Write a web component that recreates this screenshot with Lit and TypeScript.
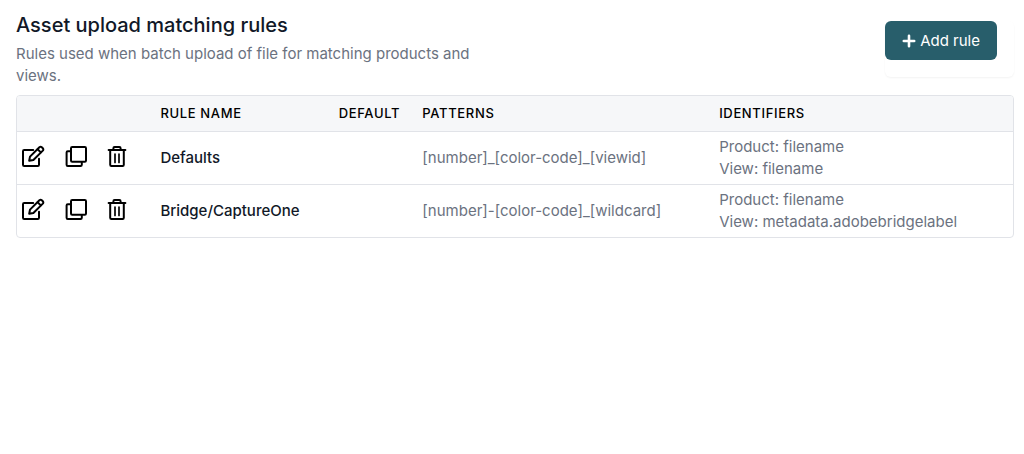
import { LitElement, html, css, svg } from "lit";
import { customElement } from "lit/decorators.js";

interface Rule {
  name: string;
  pattern: string;
  product: string;
  view: string;
}

const rules: Rule[] = [
  { name: "Defaults", pattern: "[number]_[color-code]_[viewid]", product: "filename", view: "filename" },
  { name: "Bridge/CaptureOne", pattern: "[number]-[color-code]_[wildcard]", product: "filename", view: "metadata.adobebridgelabel" },
];

const editIcon = svg`
  <path d="M12.2 5H3.2Q2 5 2 6.2V19.8Q2 21 3.2 21H16.8Q18 21 18 19.8V13.8" />
  <path d="M8.2 15.8L9 11.6L18.4 2.2Q19.6 1.2 20.8 2.2L21.8 3.2Q22.8 4.4 21.8 5.6L12.4 15Z" />
  <path d="M16.6 4.2L19.8 7.4" />`;

const copyIcon = svg`
  <rect x="8" y="2" width="15" height="14.8" rx="1.2" />
  <path d="M7.8 6.2H4.8Q3.6 6.2 3.6 7.4V19.8Q3.6 21 4.8 21H17.6Q18.8 21 18.8 19.8V17" />`;

const trashIcon = svg`
  <path d="M3.6 5H20.4" />
  <path d="M8.4 5V3.2Q8.4 2 9.6 2H14.4Q15.6 2 15.6 3.2V5" />
  <path d="M5.2 5.4V19.8Q5.2 21 6.4 21H17.6Q18.8 21 18.8 19.8V5.4" />
  <path d="M10 9V17.4M14 9V17.4" stroke-width="1.7" />`;

@customElement("app-root")
export class AppRoot extends LitElement {
  static styles = css`
    :host {
      display: block;
      font-family: Inter, sans-serif;
      font-size: 15px;
      line-height: 22px;
      color: #6b7280;
    }
    .page { padding: 14px 10px 16px 16px; }
    .head { display: flex; justify-content: space-between; align-items: flex-start; margin-bottom: 8px; }
    .intro { max-width: 480px; }
    h1 { margin: 0; font-size: 20px; line-height: 22px; font-weight: 500; color: #111827; }
    p { margin: 7px 0 0; }
    .action {
      margin-top: 7px; padding: 0 17px 17px 0;
      border-radius: 6px;
      box-shadow: 0 1px 2px rgba(0, 0, 0, 0.05);
    }
    .add {
      display: flex; align-items: center; gap: 4px;
      height: 39px; padding: 0 17px;
      border: 0; border-radius: 6px;
      background: #285e6b; color: #fff;
      font: 400 15px/22px Inter, sans-serif;
    }
    .add svg { width: 14px; height: 14px; fill: none; stroke: currentColor; stroke-width: 2.6; stroke-linecap: round; }
    .frame { border: 1px solid #e1e3e8; border-radius: 4px; overflow: hidden; }
    table { width: 100%; border-collapse: collapse; table-layout: fixed; }
    th {
      height: 33px; padding: 0 0 2px; background: #f6f7f9; color: #000;
      font-size: 13px; line-height: 20px; font-weight: 500; letter-spacing: 0.05em;
      text-align: left; text-transform: uppercase;
    }
    td { height: 44px; padding: 4px 0; border-top: 1px solid #e1e3e8; }
    .tools { width: 14.4%; }
    .name { width: 17.9%; }
    .default { width: 8.4%; }
    .pattern { width: 29.8%; }
    .label { font-weight: 500; color: #111827; }
    .buttons { display: flex; gap: 18px; padding: 0 0 2px 4px; }
    .icon { display: flex; padding: 0; border: 0; background: none; color: #000; }
    .icon svg {
      width: 24px; height: 24px;
      fill: none; stroke: currentColor; stroke-width: 2;
      stroke-linecap: round; stroke-linejoin: round;
    }
  `;

  private iconButton(label: string, shape: unknown) {
    return html`<button class="icon" type="button" aria-label=${label}>
      <svg viewBox="0 0 24 24" aria-hidden="true">${shape}</svg>
    </button>`;
  }

  render() {
    return html`
      <main class="page">
        <header class="head">
          <div class="intro">
            <h1>Asset upload matching rules</h1>
            <p>Rules used when batch upload of file for matching products and views.</p>
          </div>
          <div class="action">
            <button class="add" type="button">
              <svg viewBox="0 0 14 14" aria-hidden="true"><path d="M7 1.8V12.2M1.8 7H12.2" /></svg>
              <span>Add rule</span>
            </button>
          </div>
        </header>
        <div class="frame">
          <table>
            <thead>
              <tr>
                <th class="tools"></th>
                <th class="name" scope="col">Rule name</th>
                <th class="default" scope="col">Default</th>
                <th class="pattern" scope="col">Patterns</th>
                <th scope="col">Identifiers</th>
              </tr>
            </thead>
            <tbody>
              ${rules.map(
                (r) => html`<tr>
                  <td>
                    <div class="buttons">
                      ${this.iconButton(`Edit ${r.name}`, editIcon)}
                      ${this.iconButton(`Duplicate ${r.name}`, copyIcon)}
                      ${this.iconButton(`Delete ${r.name}`, trashIcon)}
                    </div>
                  </td>
                  <td class="label">${r.name}</td>
                  <td></td>
                  <td>${r.pattern}</td>
                  <td>Product: ${r.product}<br />View: ${r.view}</td>
                </tr>`
              )}
            </tbody>
          </table>
        </div>
      </main>
    `;
  }
}
